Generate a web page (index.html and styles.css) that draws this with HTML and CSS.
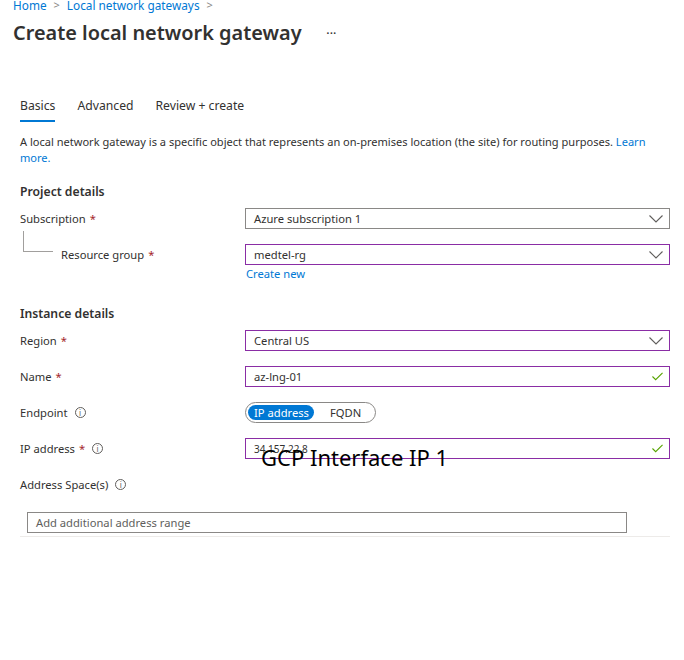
FILE: index.html
```html
<!DOCTYPE html>
<html lang="en">
<head>
<meta charset="utf-8">
<title>Create local network gateway</title>
<link rel="stylesheet" href="styles.css">
</head>
<body>
<div class="page">
  <nav class="crumbs">
    <a class="crumb">Home</a><span class="sep">&gt;</span><a class="crumb">Local network gateways</a><span class="sep">&gt;</span>
  </nav>
  <header class="title-row">
    <h1 class="title">Create local network gateway</h1>
    <span class="more">· · ·</span>
  </header>

  <div class="tabs">
    <span class="tab active">Basics</span>
    <span class="tab">Advanced</span>
    <span class="tab">Review + create</span>
  </div>

  <p class="desc">A local network gateway is a specific object that represents an on-premises location (the site) for routing purposes. <a class="link">Learn more.</a></p>

  <h2 class="section">Project details</h2>
  <div class="form">
    <div class="label">Subscription <span class="req">*</span></div>
    <div class="field select"><span>Azure subscription 1</span><svg class="chev" viewBox="0 0 14 8"><path d="M0.5 0.5 L7 7 L13.5 0.5" /></svg></div>

    <div class="label nested"><span class="tree"></span>Resource group <span class="req">*</span></div>
    <div class="field-wrap">
      <div class="field select dirty"><span>medtel-rg</span><svg class="chev" viewBox="0 0 14 8"><path d="M0.5 0.5 L7 7 L13.5 0.5" /></svg></div>
      <a class="link create">Create new</a>
    </div>
  </div>

  <h2 class="section inst">Instance details</h2>
  <div class="form">
    <div class="label">Region <span class="req">*</span></div>
    <div class="field select dirty"><span>Central US</span><svg class="chev" viewBox="0 0 14 8"><path d="M0.5 0.5 L7 7 L13.5 0.5" /></svg></div>

    <div class="label">Name <span class="req">*</span></div>
    <div class="field dirty"><span>az-lng-01</span><svg class="check" viewBox="0 0 12 9"><path d="M0.5 4.5 L4 8 L11.5 0.5" /></svg></div>

    <div class="label">Endpoint <span class="info">i</span></div>
    <div class="toggle-cell">
      <div class="toggle"><span class="opt on">IP address</span><span class="opt">FQDN</span></div>
    </div>

    <div class="label">IP address <span class="req">*</span> <span class="info">i</span></div>
    <div class="field dirty ip"><span class="small">34.157.22.8</span><svg class="check" viewBox="0 0 12 9"><path d="M0.5 4.5 L4 8 L11.5 0.5" /></svg><span class="overlay">GCP Interface IP 1</span></div>

    <div class="label">Address Space(s) <span class="info">i</span></div>
    <div></div>
  </div>

  <div class="range-box">
    <div class="range-input">Add additional address range</div>
  </div>
</div>
</body>
</html>
```
FILE: styles.css
```css
html, body {
  margin: 0;
  padding: 0;
  background: #ffffff;
}
body {
  font-family: "Noto Sans", "Open Sans", sans-serif;
  color: #323130;
  font-size: 11.2px;
}
.page {
  width: 684px;
  height: 660px;
  overflow: hidden;
}
.crumbs {
  margin-top: -4px;
  padding-left: 13px;
  font-size: 11.8px;
  line-height: 18px;
  color: #0078d4;
  display: flex;
  align-items: center;
  white-space: nowrap;
}
.crumb { color: #0078d4; }
.sep {
  color: #8a8886;
  margin: 0 7px;
  font-size: 11px;
}
.title-row {
  display: flex;
  align-items: center;
  padding-left: 13px;
  margin-top: 5px;
  height: 28px;
}
.title {
  margin: 0;
  font-size: 19.9px;
  font-weight: 600;
  line-height: 28px;
  color: #323130;
}
.more {
  margin-left: 25px;
  font-size: 10px;
  color: #323130;
  letter-spacing: -1px;
  font-weight: 700;
}
.tabs {
  display: flex;
  gap: 22px;
  padding-left: 20px;
  margin-top: 46px;
  font-size: 12.2px;
}
.tab {
  padding: 4px 0 6px;
  line-height: 17px;
  border-bottom: 2px solid transparent;
}
.tab.active { border-bottom-color: #0078d4; }
.desc {
  margin: 12px 20px 0 20px;
  font-size: 11.05px;
  line-height: 16px;
}
.link { color: #0078d4; }
.section {
  margin: 18px 0 0 20px;
  font-size: 12.2px;
  font-weight: 600;
  line-height: 16px;
}
.section.inst { margin-top: 24px; }
.form {
  display: grid;
  grid-template-columns: 225px 425px;
  padding-left: 20px;
  row-gap: 15px;
  margin-top: 8px;
  align-items: start;
}
.label {
  display: flex;
  align-items: center;
  height: 21px;
  font-size: 11.2px;
  white-space: nowrap;
}
.req { color: #a4262c; margin-left: 4px; }
.label.nested { padding-left: 3px; }
.tree {
  width: 30px;
  height: 21px;
  margin-top: -13px;
  margin-right: 8px;
  border-left: 1px solid #a19f9d;
  border-bottom: 1px solid #a19f9d;
  box-sizing: border-box;
  align-self: flex-start;
  flex: none;
}
.field {
  box-sizing: border-box;
  height: 21px;
  border: 1px solid #8a8886;
  display: flex;
  align-items: center;
  justify-content: space-between;
  padding: 0 6px 0 8px;
  font-size: 11.2px;
  position: relative;
  white-space: nowrap;
}
.field.dirty { border-color: #8a2da5; }
.chev {
  width: 14px;
  height: 8px;
  fill: none;
  stroke: #605e5c;
  stroke-width: 1.1;
}
.check {
  width: 11px;
  height: 9px;
  fill: none;
  stroke: #57a300;
  stroke-width: 1.2;
}
.field-wrap {
  display: flex;
  flex-direction: column;
}
.create {
  font-size: 11.2px;
  line-height: 16px;
  margin-top: 1px;
  padding-left: 1px;
}
.toggle-cell { height: 21px; }
.toggle {
  box-sizing: border-box;
  width: 131px;
  height: 21px;
  border: 1px solid #8a8886;
  border-radius: 11px;
  display: flex;
  align-items: center;
  padding: 0 2px;
  font-size: 11.2px;
  white-space: nowrap;
}
.opt {
  height: 15px;
  line-height: 15px;
  padding: 0 5px 0 6px;
}
.opt.on {
  background: #0078d4;
  color: #fff;
  border-radius: 8px;
  margin-right: 10px;
}
.info {
  box-sizing: border-box;
  width: 11px;
  height: 11px;
  border: 1px solid #605e5c;
  border-radius: 50%;
  display: inline-flex;
  align-items: center;
  justify-content: center;
  font-size: 8px;
  line-height: 1;
  color: #605e5c;
  margin-left: 7px;
}
.small { font-size: 10px; }
.overlay {
  position: absolute;
  left: 15px;
  top: 5px;
  font-family: "Noto Sans", sans-serif;
  font-size: 22px;
  line-height: 26px;
  color: #000;
  white-space: nowrap;
}
.range-box {
  margin: 17px 14px 0 20px;
  padding: 0 0 3px 7px;
  border-bottom: 1px solid #edebe9;
}
.range-input {
  box-sizing: border-box;
  width: 600px;
  height: 21px;
  border: 1px solid #8a8886;
  padding-left: 8px;
  font-size: 11.2px;
  line-height: 19px;
  color: #605e5c;
}
```
